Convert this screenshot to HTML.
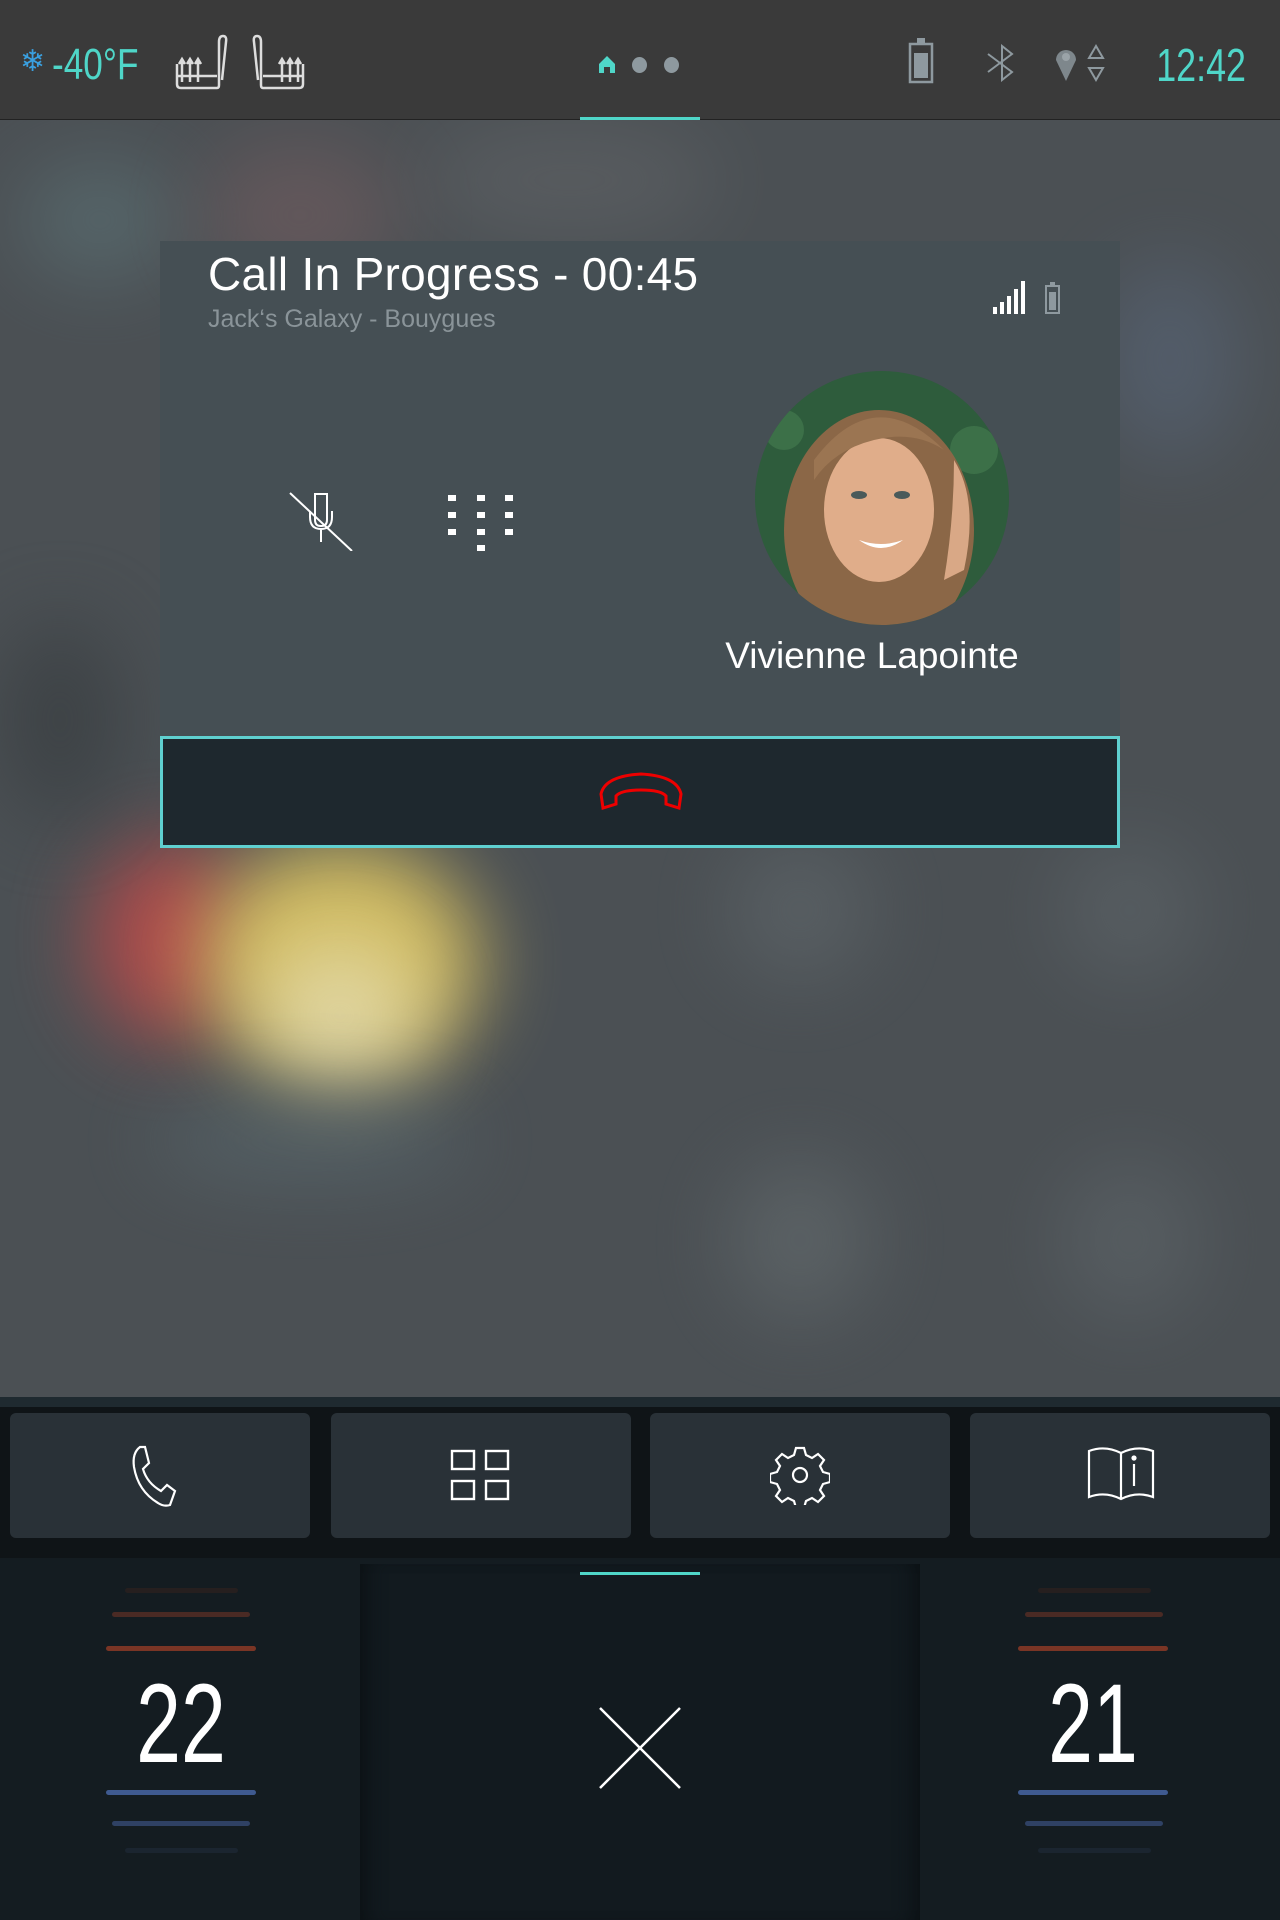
<!DOCTYPE html>
<html><head><meta charset="utf-8"><style>
*{margin:0;padding:0;box-sizing:border-box}
body{width:1280px;height:1920px;position:relative;overflow:hidden;background:#4a4f53;font-family:"Liberation Sans",sans-serif}
.abs{position:absolute}
.bg{left:0;top:120px;width:1280px;height:1277px;overflow:hidden;background:#4b5054}
.blob{position:absolute;border-radius:50%;filter:blur(40px)}
.top{left:0;top:0;width:1280px;height:120px;background:#3a3a3a;border-bottom:1px solid #222}
.teal{color:#4fd6c8}
.card{left:160px;top:241px;width:960px;height:495px;background:#454f54}
.end{left:160px;top:736px;width:960px;height:112px;background:#1e282e;border:3px solid #5fd0d0}
.tilebar{left:0;top:1397px;width:1280px;height:161px;background:#0f1417;border-top:10px solid #1f2a30}
.tile{position:absolute;top:6px;height:125px;width:300px;background:#293137;border-radius:6px}
.clim{left:0;top:1558px;width:1280px;height:362px;background:#141c21}
.num{position:absolute;color:#fff;font-size:112px;font-weight:300;transform:scaleX(.72);transform-origin:center;width:200px;text-align:center;line-height:1}
.ln{position:absolute;height:5px;border-radius:3px}
</style></head><body>
<div class="abs bg">
 <div class="blob" style="left:20px;top:40px;width:160px;height:120px;background:#5d7478;opacity:.6"></div>
 <div class="blob" style="left:200px;top:20px;width:200px;height:150px;background:#7a5f62;opacity:.5"></div>
 <div class="blob" style="left:420px;top:0px;width:300px;height:120px;background:#6b6d70;opacity:.4"></div>
 <div class="blob" style="left:1100px;top:140px;width:140px;height:200px;background:#5b6a80;opacity:.5"></div>
 <div class="blob" style="left:90px;top:720px;width:160px;height:200px;background:#b84a4a;opacity:.9"></div>
 <div class="blob" style="left:200px;top:720px;width:280px;height:240px;background:#d8c160;opacity:.95"></div>
 <div class="blob" style="left:260px;top:820px;width:160px;height:150px;background:#e4dcb0;opacity:.8"></div>
 <div class="blob" style="left:150px;top:980px;width:320px;height:80px;background:#57656a;opacity:.8"></div>
 <div class="blob" style="left:730px;top:720px;width:140px;height:140px;background:#5c6367;opacity:.8"></div>
 <div class="blob" style="left:1060px;top:720px;width:140px;height:140px;background:#5c6367;opacity:.7"></div>
 <div class="blob" style="left:730px;top:1040px;width:140px;height:160px;background:#5f6669;opacity:.8"></div>
 <div class="blob" style="left:1060px;top:1040px;width:140px;height:160px;background:#5c6367;opacity:.7"></div>
 <div class="blob" style="left:0px;top:500px;width:120px;height:200px;background:#3a3f42;opacity:.8"></div>
</div>
<div class="abs top">
 <div class="abs" style="left:20px;top:44px;color:#3aa0e0;font-size:30px">❄</div>
 <div class="abs teal" style="left:52px;top:40px;font-size:44px;font-weight:300;transform:scaleX(.8);transform-origin:left">-40°F</div>
 <svg class="abs" style="left:172px;top:34px" width="56" height="58" viewBox="0 0 56 58" fill="none" stroke="#ddd" stroke-width="2.5"><path d="M5 30v20q0 4 4 4h36q2 0 2-3v-8M47 44V8q0-6 4-6t3 6l-4 38"/><path d="M10 48v-20M18 48v-20M26 48v-20"/><path d="M7 30l3-5 3 5M15 30l3-5 3 5M23 30l3-5 3 5" fill="#ddd"/><path d="M5 42h40"/></svg>
 <svg class="abs" style="left:252px;top:34px" width="56" height="58" viewBox="0 0 56 58" fill="none" stroke="#ddd" stroke-width="2.5"><path d="M51 30v20q0 4-4 4H11q-2 0-2-3v-8M9 44V8q0-6-4-6T2 8l4 38"/><path d="M30 48v-20M38 48v-20M46 48v-20"/><path d="M27 30l3-5 3 5M35 30l3-5 3 5M43 30l3-5 3 5" fill="#ddd"/><path d="M11 42h40"/></svg>
 <svg class="abs" style="left:598px;top:56px" width="18" height="18"><path d="M1 17V8l8-8 8 8v9h-5v-6H6v6z" fill="#4fd6c8"/></svg>
 <div class="abs" style="left:632px;top:57px;width:15px;height:16px;border-radius:50%;background:#8e999f"></div>
 <div class="abs" style="left:664px;top:57px;width:15px;height:16px;border-radius:50%;background:#8e999f"></div>
 <div class="abs" style="left:580px;top:117px;width:120px;height:3px;background:#4fd6c8"></div>
 <svg class="abs" style="left:906px;top:38px" width="30" height="46" fill="none"><rect x="4" y="6" width="22" height="38" stroke="#8e999f" stroke-width="2.5"/><rect x="11" y="0" width="8" height="6" fill="#8e999f"/><rect x="8" y="15" width="14" height="25" fill="#8e999f"/></svg>
 <svg class="abs" style="left:986px;top:44px" width="30" height="38" fill="none" stroke="#8e999f" stroke-width="2"><path d="M2 10l24 18-10 8V2l10 8L2 28"/></svg>
 <svg class="abs" style="left:1052px;top:44px" width="60" height="38"><path d="M14 37L4 16a10 10 0 1 1 20 0z" fill="#7e878c"/><circle cx="14" cy="13" r="4" fill="#9aa3a8"/><path d="M44 2l-7 12h14zM37 24h14l-7 12z" fill="none" stroke="#8e999f" stroke-width="2"/></svg>
 <div class="abs teal" style="left:1132px;top:38px;width:110px;text-align:right;font-size:46px;font-weight:300;transform:scaleX(.78);transform-origin:right">12:42</div>
</div>
<div class="abs card">
 <div class="abs" style="left:48px;top:6px;color:#fff;font-size:46px;letter-spacing:.3px">Call In Progress - 00:45</div>
 <div class="abs" style="left:48px;top:64px;color:#8a9499;font-size:25px">Jack‘s Galaxy - Bouygues</div>
 <svg class="abs" style="left:833px;top:40px" width="70" height="34"><g fill="#fff"><rect x="0" y="26" width="4" height="7"/><rect x="7" y="21" width="4" height="12"/><rect x="14" y="15" width="4" height="18"/><rect x="21" y="8" width="4" height="25"/><rect x="28" y="0" width="4" height="33"/></g><rect x="53" y="5" width="13" height="27" fill="none" stroke="#8e999f" stroke-width="2"/><rect x="57" y="1" width="5" height="4" fill="#8e999f"/><rect x="56" y="11" width="7" height="18" fill="#8e999f"/></svg>
 <svg class="abs" style="left:128px;top:250px" width="68" height="60" fill="none" stroke="#fff" stroke-width="2"><path d="M27 3h12v26q0 6-6 6t-6-6z"/><path d="M22 20v6q0 12 11 12t11-12v-6M33 38v13"/><path d="M2 2l62 58"/></svg>
 <svg class="abs" style="left:288px;top:254px" width="66" height="60" fill="#fff"><rect x="0" y="0" width="8" height="6"/><rect x="29" y="0" width="8" height="6"/><rect x="57" y="0" width="8" height="6"/><rect x="0" y="17" width="8" height="6"/><rect x="29" y="17" width="8" height="6"/><rect x="57" y="17" width="8" height="6"/><rect x="0" y="34" width="8" height="6"/><rect x="29" y="34" width="8" height="6"/><rect x="57" y="34" width="8" height="6"/><rect x="29" y="50" width="8" height="6"/></svg>
 <svg class="abs" style="left:594px;top:129px" width="256" height="256"><defs><clipPath id="c"><circle cx="128" cy="128" r="127"/></clipPath></defs><g clip-path="url(#c)"><rect width="256" height="256" fill="#2e5c3c"/><circle cx="30" cy="60" r="20" fill="#3c7048"/><circle cx="220" cy="80" r="24" fill="#3c7048"/><ellipse cx="125" cy="160" rx="95" ry="120" fill="#8b6747"/><ellipse cx="125" cy="140" rx="55" ry="72" fill="#e0ad8a"/><path d="M60 90q60-80 130-10q-30-20-70-10q-40 10-60 40z" fill="#9b7552"/><ellipse cx="105" cy="125" rx="8" ry="4" fill="#4a5a5a"/><ellipse cx="148" cy="125" rx="8" ry="4" fill="#4a5a5a"/><path d="M105 170q22 16 44 0q-22 8-44 0z" fill="#fff"/><path d="M200 90q25 40 10 110l-20 10q10-60 10-120z" fill="#d9a886"/></g></svg>
 <div class="abs" style="left:542px;top:394px;width:340px;text-align:center;color:#fff;font-size:37px">Vivienne Lapointe</div>
</div>
<div class="abs end">
 <svg class="abs" style="left:436px;top:33px" width="90" height="40" fill="none" stroke="#e00" stroke-width="3"><path d="M4 36l-2-14q4-18 40-20q36 2 40 20l-2 14-13-4v-8q-5-6-25-6t-25 6v8z"/></svg>
</div>
<div class="abs tilebar">
 <div class="tile" style="left:10px"><svg class="abs" style="left:118px;top:30px" width="64" height="66" fill="none" stroke="#fff" stroke-width="2.2"><path d="M12 4q-8 6-6 20q4 24 24 36q6 4 12 2l5-14-8-6-6 6q-14-8-18-22l6-6-4-16z"/></svg></div>
 <div class="tile" style="left:331px"><svg class="abs" style="left:119px;top:36px" width="62" height="52" fill="none" stroke="#fff" stroke-width="2.4"><rect x="2" y="2" width="22" height="18"/><rect x="36" y="2" width="22" height="18"/><rect x="2" y="32" width="22" height="18"/><rect x="36" y="32" width="22" height="18"/></svg></div>
 <div class="tile" style="left:650px"><svg class="abs" style="left:120px;top:32px" width="60" height="60" fill="none" stroke="#fff" stroke-width="2.2"><path d="M26 3h8l2 7 6 3 6-4 6 6-4 6 3 6 7 2v8l-7 2-3 6 4 6-6 6-6-4-6 3-2 7h-8l-2-7-6-3-6 4-6-6 4-6-3-6-7-2v-8l7-2 3-6-4-6 6-6 6 4 6-3z"/><circle cx="30" cy="30" r="7"/></svg></div>
 <div class="tile" style="left:970px"><svg class="abs" style="left:117px;top:33px" width="68" height="56" fill="none" stroke="#fff" stroke-width="2.2"><path d="M2 5q16-6 32 2q16-8 32-2v46q-16-6-32 2q-16-8-32-2zM34 7v46"/><path d="M47 18v22"/><circle cx="47" cy="12" r="1.5" fill="#fff"/></svg></div>
</div>
<div class="abs clim">
 <div class="abs" style="left:360px;top:6px;width:560px;height:356px;background:#121a1f;box-shadow:inset 20px 0 20px -15px #0b1013,inset -20px 0 20px -15px #0b1013"></div>
 <div class="abs" style="left:580px;top:14px;width:120px;height:3px;background:#4fd6c8"></div>
 <div class="ln" style="left:125px;top:30px;width:113px;background:#261f1f"></div>
 <div class="ln" style="left:112px;top:54px;width:138px;background:#4a2a24"></div>
 <div class="ln" style="left:106px;top:88px;width:150px;background:#7a3525"></div>
 <div class="num" style="left:81px;top:110px">22</div>
 <div class="ln" style="left:106px;top:232px;width:150px;background:#3f5a90"></div>
 <div class="ln" style="left:112px;top:263px;width:138px;background:#2f4164"></div>
 <div class="ln" style="left:125px;top:290px;width:113px;background:#1b2530"></div>
 <div class="ln" style="left:1038px;top:30px;width:113px;background:#261f1f"></div>
 <div class="ln" style="left:1025px;top:54px;width:138px;background:#4a2a24"></div>
 <div class="ln" style="left:1018px;top:88px;width:150px;background:#7a3525"></div>
 <div class="num" style="left:993px;top:110px">21</div>
 <div class="ln" style="left:1018px;top:232px;width:150px;background:#3f5a90"></div>
 <div class="ln" style="left:1025px;top:263px;width:138px;background:#2f4164"></div>
 <div class="ln" style="left:1038px;top:290px;width:113px;background:#1b2530"></div>
 <svg class="abs" style="left:598px;top:148px" width="84" height="84" stroke="#fff" stroke-width="2.5"><path d="M2 2l80 80M82 2L2 82"/></svg>
</div>
</body></html>
